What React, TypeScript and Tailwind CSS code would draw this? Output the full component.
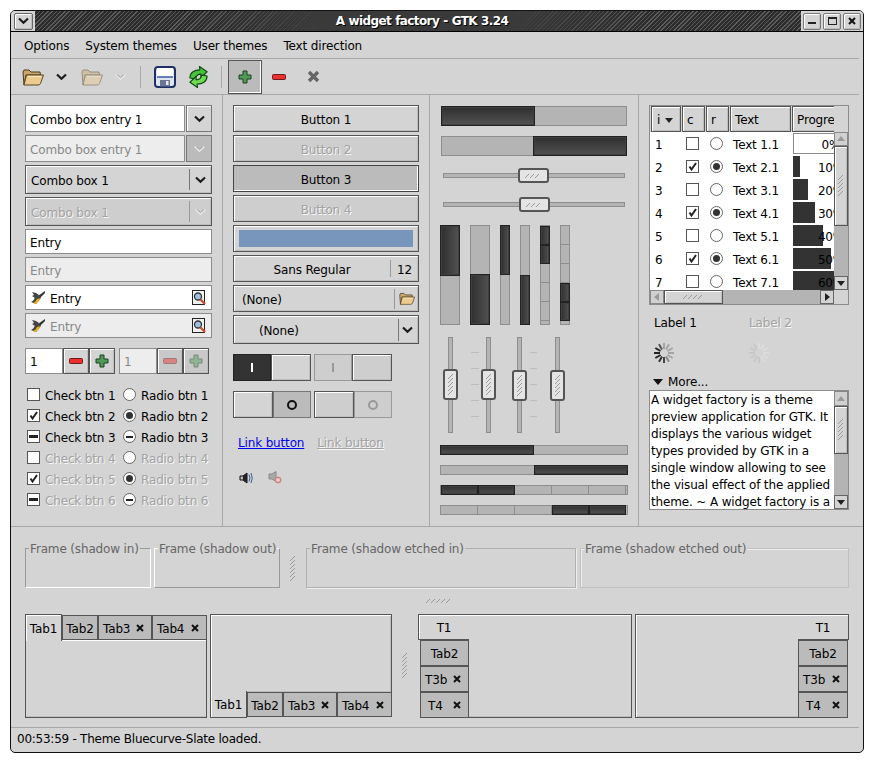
import type { ReactNode } from "react";

const raised = "border border-[#555] shadow-[inset_1px_1px_0_#fff,inset_-1px_-1px_0_#bdbdbd]";
const dimText = "text-[#a2a2a2] [text-shadow:1px_1px_0_#f8f8f8]";
const trough = "bg-[#b4b4b4] border border-[#8e8e8e]";
const fill = "bg-linear-to-b from-[#2f2f2f] to-[#525252] border border-[#222] shadow-[inset_0_0_0_1px_#3f3f3f]";
const fillV = "bg-linear-to-r from-[#2f2f2f] to-[#525252] border border-[#222] shadow-[inset_0_0_0_1px_#3f3f3f]";

// text sits a pixel under the optical centre in this theme
function T({ className = "", children }: { className?: string; children: ReactNode }) {
  return <span className={`pt-[2px] ${className}`}>{children}</span>;
}

function Chevron({ dim = false }: { dim?: boolean }) {
  return (
    <svg width="11" height="8" viewBox="0 0 11 8">
      <path d="M1 1.5 L5.5 5.8 L10 1.5" fill="none" stroke={dim ? "#e8e8e8" : "#1c1c1c"} strokeWidth="2.2" />
      {dim && <path d="M2 1.5 L5.5 4.6 L9 1.5" fill="none" stroke="#9a9a9a" strokeWidth="1" />}
    </svg>
  );
}

function Folder({ dim = false, size = 22 }: { dim?: boolean; size?: number }) {
  return (
    <svg width={size} height={(size * 18) / 22} viewBox="0 0 22 18" opacity={dim ? 0.45 : 1}>
      <path d="M1 4 L2 2 H7 L9 4 H18 L18.5 7 H4 L2 17 Z" fill="#c9a76a" stroke="#4a3a20" strokeWidth="1" />
      <path d="M4.5 7 H21.5 L18.5 15.5 Q18 17 16 17 H2 Z" fill="#eccb8f" stroke="#5a4526" strokeWidth="1" />
      <path d="M6 8.5 H19" stroke="#f9e8c4" strokeWidth="1" />
    </svg>
  );
}

function Save() {
  return (
    <svg width="22" height="22" viewBox="0 0 22 22">
      <rect x="1" y="1" width="20" height="20" rx="3" fill="#dfe5f0" stroke="#1e2f66" strokeWidth="2" />
      <rect x="3" y="2" width="16" height="9" fill="#fff" />
      <path d="M3 11 H19" stroke="#3a58a0" strokeWidth="1.5" />
      <rect x="6" y="14" width="10" height="6.5" fill="#6a7692" />
      <rect x="12" y="15" width="2.5" height="4" fill="#e8eaf0" />
    </svg>
  );
}

function Refresh() {
  const arrow = "M2 13 C2 7 7 4.5 12.5 4.5 L12 1 L20 6.5 L13.5 12.5 L13.5 9 C10 9 8.5 10.5 7.5 14 Z";
  return (
    <svg width="21" height="24" viewBox="0 0 22 24">
      <path d={arrow} fill="#47c23a" stroke="#0d4a12" strokeWidth="1.2" strokeLinejoin="round" />
      <path d={arrow} fill="#6fdc4f" stroke="#0d4a12" strokeWidth="1.2" strokeLinejoin="round" transform="rotate(180 11 12)" />
    </svg>
  );
}

function PlusIcon({ size = 14, dim = false }: { size?: number; dim?: boolean }) {
  return (
    <svg width={size} height={size} viewBox="0 0 14 14" opacity={dim ? 0.45 : 1}>
      <path d="M5 1 H9 V5 H13 V9 H9 V13 H5 V9 H1 V5 H5 Z" fill="#4e9a56" stroke="#1f3f22" strokeWidth="1" />
    </svg>
  );
}

function MinusIcon({ w = 14, h = 6, dim = false }: { w?: number; h?: number; dim?: boolean }) {
  return (
    <svg width={w} height={h} viewBox="0 0 14 6" preserveAspectRatio="none" opacity={dim ? 0.45 : 1}>
      <rect x="0.5" y="0.5" width="13" height="5" rx="1" fill="#ec2f2f" stroke="#6d1c1c" strokeWidth="1" />
    </svg>
  );
}

function CloseGray() {
  return (
    <svg width="13" height="13" viewBox="0 0 13 13">
      <path d="M2 2 L11 11 M11 2 L2 11" stroke="#666" strokeWidth="3.4" />
    </svg>
  );
}

function TabX() {
  return (
    <svg width="8" height="8" viewBox="0 0 8 8">
      <path d="M1 1 L7 7 M7 1 L1 7" stroke="#111" strokeWidth="2" />
    </svg>
  );
}

function Brush() {
  return (
    <svg width="16" height="15" viewBox="0 0 16 15">
      <path d="M15 1 L8 6 L10 8 L15 3 Z" fill="#333" />
      <path d="M2 2 L4 5 L2 6 L5 8 L9 5 L6 3 Z" fill="#444" />
      <path d="M5 7 L9 5 L11 8 L6 14 L1 12 C3 11 4 10 5 7 Z" fill="#444" />
      <path d="M7 9 L11 8 L6 14 L3 13 C5 12 6 11 7 9 Z" fill="#e9b21a" />
    </svg>
  );
}

function FindIcon() {
  return (
    <svg width="15" height="16" viewBox="0 0 15 16">
      <rect x="0.5" y="0.5" width="12" height="14" fill="#f2f2f2" stroke="#222" strokeWidth="1" />
      <circle cx="6" cy="6.5" r="3.5" fill="#9fc0dc" stroke="#333" strokeWidth="1.3" />
      <path d="M8.5 9.5 L13 14" stroke="#d2512d" strokeWidth="2.4" />
    </svg>
  );
}

function SpeakerOn() {
  return (
    <svg width="14" height="12" viewBox="0 0 14 12">
      <path d="M1 4 H4 L8 1 V11 L4 8 H1 Z" fill="#bdbdbd" stroke="#111" strokeWidth="1" />
      <path d="M4 4 L8 1 V11 L4 8 Z" fill="#222" />
      <path d="M10 2.5 Q12 6 10 9.5" fill="none" stroke="#3a5c93" strokeWidth="1" />
      <path d="M12 1 Q14.5 6 12 11" fill="none" stroke="#3a5c93" strokeWidth="1" />
    </svg>
  );
}

function SpeakerOff() {
  return (
    <svg width="14" height="13" viewBox="0 0 14 13">
      <path d="M1 3 H4 L8 0.5 V10.5 L4 8 H1 Z" fill="#a8a8a8" stroke="#8a8a8a" strokeWidth="1" />
      <circle cx="10" cy="9" r="3" fill="#e9a5a5" stroke="#c08080" strokeWidth="1" />
      <path d="M8.5 9 H11.5" stroke="#fff" strokeWidth="1" />
    </svg>
  );
}

function Grip({ vertical = false, count = 6 }: { vertical?: boolean; count?: number }) {
  const w = vertical ? 6 : count * 5 + 2;
  const h = vertical ? count * 4 + 2 : 6;
  const lines = Array.from({ length: count }, (_, i) => i);
  return (
    <svg width={w} height={h} viewBox={`0 0 ${w} ${h}`}>
      {lines.map((i) =>
        vertical ? (
          <path key={i} d={`M0 ${i * 4 + 5} L5 ${i * 4}`} stroke="#9a9a9a" strokeWidth="1" />
        ) : (
          <path key={i} d={`M${i * 5} 5 L${i * 5 + 4} 1`} stroke="#9a9a9a" strokeWidth="1" />
        )
      )}
    </svg>
  );
}

function Spinner({ dim = false }: { dim?: boolean }) {
  const rays = Array.from({ length: 12 }, (_, i) => i);
  const dark = ["#a4a4a4", "#a4a4a4", "#a4a4a4", "#a4a4a4", "#a4a4a4", "#8a8a8a", "#444", "#333", "#222", "#222", "#222", "#555"];
  return (
    <svg width="20" height="20" viewBox="-10 -10 20 20">
      {rays.map((i) => (
        <path key={i} d="M0 -10 V-4" stroke={dim ? (i >= 6 ? "#c8c8c8" : "#dcdcdc") : dark[i]} strokeWidth="2" transform={`rotate(${i * 30})`} />
      ))}
    </svg>
  );
}

function Check({ state }: { state: "off" | "on" | "mixed" }) {
  return (
    <span className="flex h-[13px] w-[13px] shrink-0 items-center justify-center border border-[#555] bg-white">
      {state === "on" && (
        <svg width="9" height="9" viewBox="0 0 9 9">
          <path d="M1.5 4.5 L3.5 7.5 L8 1" fill="none" stroke="#222" strokeWidth="2" />
        </svg>
      )}
      {state === "mixed" && <span className="h-[3px] w-[9px] bg-[#222]" />}
    </span>
  );
}

function Radio({ state }: { state: "off" | "on" | "mixed" }) {
  return (
    <span className="flex h-[13px] w-[13px] shrink-0 items-center justify-center rounded-full border border-[#666] bg-white">
      {state === "on" && <span className="h-[7px] w-[7px] rounded-full bg-[#333]" />}
      {state === "mixed" && <span className="h-[2px] w-[7px] bg-[#222]" />}
    </span>
  );
}

function Btn({ dim = false, pressed = false, className = "", children }: { dim?: boolean; pressed?: boolean; className?: string; children?: ReactNode }) {
  const look = pressed
    ? "border border-[#444] bg-[#bbbbbb] shadow-[inset_-1px_-1px_0_#fff]"
    : dim
      ? `${raised} bg-[#cecece] ${dimText}`
      : `${raised} bg-[#d4d4d4]`;
  return <div className={`flex items-center ${look} ${className}`}>{children}</div>;
}

function SmallBtn({ dim = false, children }: { dim?: boolean; children: ReactNode }) {
  return <div className={`flex h-full w-[26px] items-center justify-center ${raised} ${dim ? "bg-[#c8c8c8]" : "bg-[#d4d4d4]"}`}>{children}</div>;
}

function Entry({ dim = false, icons = false, className = "h-[25px]" }: { dim?: boolean; icons?: boolean; className?: string }) {
  return (
    <div className={`flex items-center gap-[4px] border border-[#8c8c8c] px-[4px] ${dim ? "bg-[#ededed] text-[#888]" : "bg-white text-black"} ${className}`}>
      {icons && <Brush />}
      <T className="flex-1">Entry</T>
      {icons && <FindIcon />}
    </div>
  );
}

function ComboEntry({ dim = false }: { dim?: boolean }) {
  return (
    <div className="flex h-[27px]">
      <div className={`flex w-[160px] items-center border border-[#8c8c8c] pl-[4px] ${dim ? "bg-[#ededed] text-[#888]" : "bg-white"}`}><T>Combo box entry 1</T></div>
      <div className={`ml-px flex w-[26px] items-center justify-center border border-[#777] ${dim ? "bg-[#bbb]" : "bg-[#d4d4d4] shadow-[inset_1px_1px_0_#fff]"}`}>
        <Chevron dim={dim} />
      </div>
    </div>
  );
}

function ComboBox({ dim = false }: { dim?: boolean }) {
  return (
    <Btn dim={dim} className="h-[29px]">
      <T className="flex-1 pl-[5px]">Combo box 1</T>
      <span className={`h-[21px] w-px ${dim ? "bg-[#999]" : "bg-[#777]"}`} />
      <span className="flex w-[21px] justify-center">
        <Chevron dim={dim} />
      </span>
    </Btn>
  );
}

function Spin({ dim = false }: { dim?: boolean }) {
  return (
    <div className="flex h-[26px] w-[90px]">
      <div className={`flex w-[38px] items-center border border-[#8c8c8c] pl-[4px] ${dim ? "bg-[#ededed] text-[#888]" : "bg-white"}`}><T>1</T></div>
      <SmallBtn dim={dim}><MinusIcon dim={dim} /></SmallBtn>
      <SmallBtn dim={dim}><PlusIcon dim={dim} /></SmallBtn>
    </div>
  );
}

function ToggleLight({ w, dim = false }: { w: string; dim?: boolean }) {
  return <div className={`${w} ${raised} ${dim ? "bg-[#cecece]" : "bg-[#d4d4d4]"}`} />;
}

function Thumb({ className = "", vertical = false }: { className?: string; vertical?: boolean }) {
  return (
    <div className={`absolute flex items-center justify-center rounded-[3px] border-2 border-[#555] bg-[#e4e4e4] ${className}`}>
      {vertical ? <Grip vertical count={5} /> : <Grip count={3} />}
    </div>
  );
}

function HSlider({ className, thumb }: { className: string; thumb: string }) {
  return (
    <div className={`relative ml-[2px] flex h-[15px] w-[182px] items-center ${className}`}>
      <div className={`h-[5px] w-full ${trough}`} />
      <Thumb className={`top-0 h-[15px] w-[31px] ${thumb}`} />
    </div>
  );
}

function VSlider({ top }: { top: string }) {
  return (
    <div className="relative flex h-[96px] w-[15px] justify-center">
      <div className={`h-full w-[5px] ${trough}`} />
      <Thumb vertical className={`left-0 h-[31px] w-[15px] ${top}`} />
    </div>
  );
}

function Ticks({ w }: { w: string }) {
  return (
    <div className={`flex flex-col gap-[15px] pt-[15px] ${w}`}>
      <div className="h-px bg-[#bdbdbd]" />
      <div className="h-px bg-[#bdbdbd]" />
      <div className="h-px bg-[#bdbdbd]" />
      <div className="h-px bg-[#bdbdbd]" />
      <div className="h-px bg-[#bdbdbd]" />
    </div>
  );
}

function VProgress({ w, h, bottom = false }: { w: string; h: string; bottom?: boolean }) {
  return (
    <div className={`flex h-[100px] flex-col ${w} ${trough} ${bottom ? "justify-end" : ""}`}>
      <div className={`${h} ${fillV} -m-px`} />
    </div>
  );
}

function VSegments({ from, to }: { from: number; to: number }) {
  const cells = [0, 1, 2, 3, 4];
  return (
    <div className={`flex h-[100px] w-[10px] flex-col ${trough}`}>
      {cells.map((i) => (
        <div key={i} className={`h-[19px] ${i >= from && i < to ? `${fillV} -mx-px` : "border-b border-[#8e8e8e]"}`} />
      ))}
    </div>
  );
}

function HSegments({ from, to }: { from: number; to: number }) {
  const cells = [0, 1, 2, 3, 4];
  return (
    <div className={`flex h-[10px] w-[188px] ${trough}`}>
      {cells.map((i) => (
        <div key={i} className={`w-[37px] ${i >= from && i < to ? `${fill} -my-px` : "border-r border-[#8e8e8e]"}`} />
      ))}
    </div>
  );
}

function Arrow({ dir, dim = false }: { dir: "up" | "down" | "left" | "right"; dim?: boolean }) {
  const d = { up: "M0 6 L4 1 L8 6 Z", down: "M0 2 L8 2 L4 7 Z", left: "M6 0 L6 8 L1 4 Z", right: "M2 0 L2 8 L7 4 Z" }[dir];
  return (
    <svg width="8" height="8" viewBox="0 0 8 8">
      <path d={d} fill={dim ? "#999" : "#222"} />
    </svg>
  );
}

const rows = [
  { i: 1, on: false, pct: 0, bar: "w-0" },
  { i: 2, on: true, pct: 10, bar: "w-[7px]" },
  { i: 3, on: false, pct: 20, bar: "w-[15px]" },
  { i: 4, on: true, pct: 30, bar: "w-[22px]" },
  { i: 5, on: false, pct: 40, bar: "w-[30px]" },
  { i: 6, on: true, pct: 50, bar: "w-[38px]" },
  { i: 7, on: false, pct: 60, bar: "w-[46px]" },
];

const textLines = [
  "A widget factory is a theme",
  "preview application for GTK. It",
  "displays the various widget",
  "types provided by GTK in a",
  "single window allowing to see",
  "the visual effect of the applied",
  "theme. ~ A widget factory is a",
];

function HeaderCell({ w, children }: { w: string; children: ReactNode }) {
  return <div className={`flex h-[26px] shrink-0 items-center overflow-hidden pl-[4px] pt-[2px] ${w} ${raised}`}>{children}</div>;
}

function TreeView() {
  return (
    <div className="flex h-[200px] w-[200px] flex-col border border-[#8c8c8c] bg-[#d4d4d4]">
      <div className="flex h-[184px]">
        <div className="flex w-[184px] flex-col overflow-hidden">
          <div className="flex gap-[1px] bg-[#d4d4d4] pl-px">
            <HeaderCell w="w-[30px]">
              <span className="pl-px">i</span>
              <span className="ml-[5px]"><Arrow dir="down" /></span>
            </HeaderCell>
            <HeaderCell w="w-[23px]">c</HeaderCell>
            <HeaderCell w="w-[23px]">r</HeaderCell>
            <HeaderCell w="w-[61px]">Text</HeaderCell>
            <HeaderCell w="w-[60px]">Progress</HeaderCell>
          </div>
          <div className="h-[158px] overflow-hidden bg-white">
            {rows.map((r) => (
              <div key={r.i} className="flex h-[23px] items-center">
                <span className="w-[31px] shrink-0 pl-[5px] pt-[3px]">{r.i}</span>
                <span className="flex w-[23px] shrink-0 justify-center"><Check state={r.on ? "on" : "off"} /></span>
                <span className="flex w-[25px] shrink-0 justify-center"><Radio state={r.on ? "on" : "off"} /></span>
                <span className="w-[64px] shrink-0 whitespace-nowrap pl-[4px] pt-[3px]">{`Text ${r.i}.1`}</span>
                <span className={`relative flex h-[21px] w-[76px] shrink-0 items-center justify-center pt-[2px] ${r.pct === 0 ? "border border-[#8c8c8c]" : ""}`}>
                  <span className={`absolute left-0 top-0 h-full bg-[#333] ${r.bar}`} />
                  <span className="relative">{r.pct}%</span>
                </span>
              </div>
            ))}
          </div>
        </div>
        <div className="flex w-[14px] flex-col pt-[26px]">
          <div className="flex h-[14px] items-center justify-center border border-[#888] bg-[#d0d0d0]"><Arrow dir="up" dim /></div>
          <div className={`flex h-[80px] items-center justify-center bg-[#d4d4d4] ${raised}`}><Grip vertical count={5} /></div>
          <div className="flex-1 bg-[#b4b4b4]" />
          <div className="flex h-[14px] items-center justify-center border border-[#666] bg-[#d4d4d4]"><Arrow dir="down" /></div>
        </div>
      </div>
      <div className="flex h-[14px]">
        <div className="flex w-[14px] items-center justify-center border border-[#888] bg-[#d0d0d0]"><Arrow dir="left" dim /></div>
        <div className={`flex w-[59px] items-center justify-center bg-[#d4d4d4] ${raised}`}><Grip count={4} /></div>
        <div className="w-[97px] bg-[#b4b4b4]" />
        <div className="flex w-[14px] items-center justify-center border border-[#666] bg-[#d4d4d4]"><Arrow dir="right" /></div>
      </div>
    </div>
  );
}

function TextView() {
  return (
    <div className="flex h-[120px] w-[200px] border border-[#8c8c8c] bg-white">
      <div className="h-full w-[184px] overflow-hidden pt-px pl-px leading-[17px] whitespace-pre">
        {textLines.map((line) => (
          <div key={line}>{line}</div>
        ))}
      </div>
      <div className="flex w-[14px] flex-col">
        <div className="flex h-[15px] items-center justify-center border border-[#888] bg-[#d0d0d0]"><Arrow dir="up" dim /></div>
        <div className={`flex h-[48px] items-center justify-center bg-[#d4d4d4] ${raised}`}><Grip vertical count={5} /></div>
        <div className="flex-1 bg-[#b4b4b4]" />
        <div className="flex h-[14px] items-center justify-center border border-[#666] bg-[#d4d4d4]"><Arrow dir="down" /></div>
      </div>
    </div>
  );
}

function Frame({ label, w, kind }: { label: string; w: string; kind: string }) {
  return (
    <div className={`relative h-[40px] ${w} ${kind}`}>
      <span className="absolute -top-[8px] left-[3px] whitespace-nowrap bg-[#d4d4d4] px-[1px] leading-[16px] text-[#666]">{label}</span>
    </div>
  );
}

function HTab({ w, active = false, bottom = false, label, x = false }: { w: string; active?: boolean; bottom?: boolean; label: string; x?: boolean }) {
  if (active) {
    return (
      <div className={`relative z-10 flex h-[27px] shrink-0 items-center justify-center bg-[#d4d4d4] ${w} ${bottom ? "-mt-px border-r border-b border-l border-[#555] shadow-[inset_1px_0_0_#fff]" : "-mb-px border-t border-r border-l border-[#555] shadow-[inset_1px_1px_0_#fff]"}`}>
        <T>{label}</T>
      </div>
    );
  }
  return (
    <div className={`flex h-[25px] shrink-0 items-center border border-[#555] bg-[#bbbbbb] ${x ? "justify-between pr-[7px] pl-[4px]" : "justify-center"} ${w}`}>
      <T>{label}</T>
      {x && <TabX />}
    </div>
  );
}

function TopNotebook() {
  return (
    <div className="flex h-[104px] w-[182px] flex-col">
      <div className="flex items-end">
        <HTab w="w-[37px]" active label="Tab1" />
        <HTab w="w-[36px]" label="Tab2" />
        <HTab w="w-[54px]" label="Tab3" x />
        <HTab w="w-[55px]" label="Tab4" x />
      </div>
      <div className="flex-1 border-r border-b border-l border-[#555] shadow-[inset_0_1px_0_#fff,inset_0_-1px_0_#bdbdbd]" />
    </div>
  );
}

function BottomNotebook() {
  return (
    <div className="flex h-[104px] w-[182px] flex-col">
      <div className={`flex-1 ${raised} border-b-0`} />
      <div className="flex items-start">
        <HTab w="w-[37px]" active bottom label="Tab1" />
        <HTab w="w-[36px]" label="Tab2" />
        <HTab w="w-[54px]" label="Tab3" x />
        <HTab w="w-[55px]" label="Tab4" x />
      </div>
    </div>
  );
}

function SideTab({ label, x = false }: { label: string; x?: boolean }) {
  return (
    <div className={`flex h-[26px] items-center border border-[#555] bg-[#bbbbbb] ${x ? "justify-between pr-[7px] pl-[4px]" : "justify-center"}`}>
      <T className={label === "T4" ? "pl-[3px]" : ""}>{label}</T>
      {x && <TabX />}
    </div>
  );
}

function SideNotebook({ right = false }: { right?: boolean }) {
  const t1 = right
    ? "border-t border-r border-b shadow-[inset_0_1px_0_#fff]"
    : "border-t border-b border-l shadow-[inset_1px_1px_0_#fff]";
  const pane = right
    ? "border-t border-b border-l shadow-[inset_1px_1px_0_#fff,inset_0_-1px_0_#bdbdbd]"
    : "border-t border-r border-b shadow-[inset_0_1px_0_#fff,inset_0_-1px_0_#bdbdbd]";
  return (
    <div className={`flex h-[104px] w-[214px] ${right ? "flex-row-reverse" : ""}`}>
      <div className="flex w-[51px] flex-col">
        <div className={`flex h-[26px] items-center justify-center border-[#555] ${t1}`}><T>T1</T></div>
        <div className={`flex flex-col ${right ? "mr-px" : "ml-[2px]"}`}>
          <SideTab label="Tab2" />
          <SideTab label="T3b" x />
          <SideTab label="T4" x />
        </div>
      </div>
      <div className={`flex-1 border-[#555] ${pane}`} />
    </div>
  );
}

export default function App() {
  return (
    <div className="h-[763px] w-[874px] bg-white p-[10px] [font-family:'DejaVu_Sans',sans-serif] text-[12px] leading-[16px] tracking-[-0.15px] text-black">
      <div className="flex h-[743px] w-[854px] flex-col overflow-hidden rounded-t-[5px] rounded-b-[5px] border border-[#111] bg-[#d4d4d4]">
        {/* Title bar */}
        <div className="flex h-[21px] shrink-0 items-center border-b border-black">
          <div className="flex h-full w-[24px] items-center justify-center bg-[#d4d4d4]">
            <div className={`flex h-[17px] w-[19px] items-center justify-center rounded-[2px] ${raised} border-[#666]`}><Chevron /></div>
          </div>
          <div className="relative flex h-full flex-1 items-center justify-center overflow-hidden bg-[repeating-linear-gradient(135deg,#5c5c5c_0px,#5c5c5c_1px,#2c2c2c_1px,#2c2c2c_3px)] pl-[8px]">
            <div className="absolute inset-0 bg-[linear-gradient(90deg,transparent_20%,#3a3a3a_38%,#3a3a3a_62%,transparent_80%)]" />
            <span className="relative font-bold tracking-[-0.6px] text-white [text-shadow:1px_1px_0_#000] [word-spacing:0.5px]">A widget factory - GTK 3.24</span>
          </div>
          <div className="flex h-full w-[62px] items-center justify-center gap-[2px] bg-[#d4d4d4]">
            <div className={`flex h-[17px] w-[18px] items-center justify-center rounded-[2px] ${raised} border-[#777]`}><span className="mt-[4px] h-[2px] w-[8px] bg-[#222]" /></div>
            <div className={`flex h-[17px] w-[18px] items-center justify-center rounded-[2px] ${raised} border-[#777]`}><span className="h-[8px] w-[9px] border border-t-2 border-[#222]" /></div>
            <div className={`flex h-[17px] w-[18px] items-center justify-center rounded-[2px] ${raised} border-[#777]`}><TabX /></div>
          </div>
        </div>

        {/* Menu bar */}
        <div className="flex h-[26px] shrink-0 items-center gap-[16px] pt-[2px] pl-[13px]">
          <span>Options</span>
          <span>System themes</span>
          <span>User themes</span>
          <span>Text direction</span>
        </div>
        <div className="mr-[4px] h-px shrink-0 bg-[#a8a8a8]" />

        {/* Toolbar */}
        <div className="flex h-[35px] shrink-0 items-center pl-[11px]">
          <Folder />
          <span className="ml-[12px]"><Chevron /></span>
          <span className="ml-[14px]"><Folder dim /></span>
          <span className="ml-[12px]"><Chevron dim /></span>
          <span className="ml-[14px] h-[22px] w-px bg-[#a8a8a8]" />
          <span className="ml-[13px]"><Save /></span>
          <span className="ml-[12px]"><Refresh /></span>
          <span className="ml-[12px] h-[22px] w-px bg-[#a8a8a8]" />
          <span className="ml-[6px] flex h-[34px] w-[34px] items-center justify-center border border-[#555] bg-[#bbbbbb] shadow-[inset_-1px_-1px_0_#fff]"><PlusIcon /></span>
          <span className="ml-[10px]"><MinusIcon /></span>
          <span className="ml-[21px]"><CloseGray /></span>
        </div>
        <div className="mr-[4px] h-px shrink-0 bg-[#a8a8a8]" />

        {/* Main columns */}
        <div className="flex h-[431px] shrink-0">
          <div className="flex w-[212px] shrink-0 flex-col border-r border-[#a8a8a8] pt-[10px] pl-[14px]">
            <div className="flex w-[187px] flex-col gap-[3px]">
              <ComboEntry />
              <ComboEntry dim />
              <ComboBox />
              <ComboBox dim />
              <Entry />
              <Entry dim />
              <Entry icons />
              <Entry dim icons />
            </div>
            <div className="mt-[10px] flex gap-[4px]">
              <Spin />
              <Spin dim />
            </div>
            <div className="mt-[10px] ml-[2px] grid w-[190px] grid-cols-[96px_94px] auto-rows-[21px] items-center">
              {(["off", "on", "mixed", "off", "on", "mixed"] as const).map((s, i) => (
                <div key={i} className={`contents ${i > 2 ? dimText : ""}`}>
                  <span className="flex items-center gap-[5px] whitespace-nowrap"><Check state={s} /><T>{`Check btn ${i + 1}`}</T></span>
                  <span className="flex items-center gap-[5px] whitespace-nowrap"><Radio state={s} /><T>{`Radio btn ${i + 1}`}</T></span>
                </div>
              ))}
            </div>
          </div>

          <div className="flex w-[207px] shrink-0 flex-col border-r border-[#a8a8a8] pt-[10px] pl-[10px]">
            <div className="flex w-[186px] flex-col gap-[3px]">
              <Btn className="h-[27px] justify-center"><T>Button 1</T></Btn>
              <Btn dim className="h-[27px] justify-center"><T>Button 2</T></Btn>
              <Btn pressed className="h-[27px] justify-center"><T>Button 3</T></Btn>
              <Btn dim className="h-[27px] justify-center"><T>Button 4</T></Btn>
              <Btn className="h-[27px] px-[5px]"><span className="h-[17px] w-full bg-[#7896bb]" /></Btn>
              <Btn className="h-[27px]">
                <T className="w-[156px] text-center">Sans Regular</T>
                <span className="h-[17px] w-px bg-[#999]" />
                <T className="pl-[6px]">12</T>
              </Btn>
              <Btn className="h-[27px]">
                <T className="w-[160px] pl-[8px]">(None)</T>
                <span className="h-[20px] w-px bg-[#999]" />
                <span className="pl-[4px]"><Folder size={16} /></span>
              </Btn>
              <Btn className="h-[29px]">
                <T className="w-[164px] pl-[25px]">(None)</T>
                <span className="h-[22px] w-px bg-[#777]" />
                <span className="pl-[3px]"><Chevron /></span>
              </Btn>
            </div>
            <div className="mt-[10px] flex h-[27px]">
              <div className="flex w-[38px] items-center justify-center border border-[#222] bg-[#333]"><span className="h-[9px] w-[2px] bg-white" /></div>
              <ToggleLight w="w-[40px]" />
              <div className="ml-[3px] flex w-[38px] items-center justify-center border border-[#999] bg-[#cecece]"><span className="h-[9px] w-[2px] bg-[#999]" /></div>
              <ToggleLight w="w-[40px]" dim />
            </div>
            <div className="mt-[10px] flex h-[27px]">
              <ToggleLight w="w-[40px]" />
              <div className="flex w-[38px] items-center justify-center border border-[#777] bg-[#bbbbbb]"><span className="h-[10px] w-[10px] rounded-full border-2 border-[#111]" /></div>
              <div className="ml-[3px] flex"><ToggleLight w="w-[40px]" dim /></div>
              <div className="flex w-[38px] items-center justify-center border border-[#999] bg-[#cecece]"><span className="h-[10px] w-[10px] rounded-full border-2 border-[#999]" /></div>
            </div>
            <div className="mt-[17px] flex gap-[13px] pl-[5px]">
              <span className="text-[#0000ee] underline">Link button</span>
              <span className={`underline ${dimText}`}>Link button</span>
            </div>
            <div className="mt-[20px] flex items-center gap-[15px] pl-[6px]">
              <SpeakerOn />
              <SpeakerOff />
            </div>
          </div>

          <div className="flex w-[209px] shrink-0 flex-col border-r border-[#a8a8a8] pt-[11px] pl-[10px]">
            <div className={`ml-[1px] flex h-[20px] w-[186px] ${trough}`}><div className={`-m-px w-[94px] ${fill}`} /></div>
            <div className={`mt-[10px] ml-[1px] flex h-[20px] w-[186px] justify-end ${trough}`}><div className={`-m-px w-[94px] ${fill}`} /></div>
            <HSlider className="mt-[12px] ml-[3px]" thumb="left-[75px]" />
            <HSlider className="mt-[14px] ml-[3px]" thumb="left-[76px]" />
            <div className="mt-[13px] flex gap-[10px]">
              <VProgress w="w-[20px]" h="h-[51px]" />
              <VProgress w="w-[20px]" h="h-[51px]" bottom />
              <VProgress w="w-[10px]" h="h-[50px]" />
              <VProgress w="w-[10px]" h="h-[50px]" bottom />
              <VSegments from={0} to={2} />
              <VSegments from={3} to={5} />
            </div>
            <div className="mt-[12px] flex pl-[3px]">
              <VSlider top="top-[32px]" />
              <div className="w-[13px]" />
              <Ticks w="w-[8px]" />
              <div className="w-[2px]" />
              <VSlider top="top-[32px]" />
              <div className="w-[16px]" />
              <VSlider top="top-[33px]" />
              <div className="w-[3px]" />
              <Ticks w="w-[7px]" />
              <div className="w-[13px]" />
              <VSlider top="top-[33px]" />
            </div>
            <div className={`mt-[12px] flex h-[10px] w-[188px] ${trough}`}><div className={`-my-px -ml-px w-[94px] ${fill}`} /></div>
            <div className={`mt-[10px] flex h-[10px] w-[188px] justify-end ${trough}`}><div className={`-my-px -mr-px w-[94px] ${fill}`} /></div>
            <div className="mt-[10px]"><HSegments from={0} to={2} /></div>
            <div className="mt-[10px]"><HSegments from={3} to={5} /></div>
          </div>

          <div className="flex w-[224px] shrink-0 flex-col pt-[10px] pl-[10px]">
            <TreeView />
            <div className="mt-[9px] flex h-[16px] items-center pl-[5px]">
              <T className="w-[95px]">Label 1</T>
              <T className={dimText}>Label 2</T>
            </div>
            <div className="mt-[13px] flex h-[20px] pl-[5px]">
              <span className="w-[95px]"><Spinner /></span>
              <Spinner dim />
            </div>
            <div className="mt-[10px] flex h-[17px] items-center gap-[5px] pl-[4px]">
              <svg width="10" height="6" viewBox="0 0 10 6"><path d="M0 0 H10 L5 6 Z" fill="#111" /></svg>
              <span>More...</span>
            </div>
            <TextView />
          </div>
        </div>
        <div className="h-px shrink-0 bg-[#a8a8a8]" />

        {/* Frames */}
        <div className="flex items-center pt-[21px] pl-[14px]">
          <Frame label="Frame (shadow in)" w="w-[126px]" kind="border-t border-l border-t-[#999] border-l-[#999] border-r border-b border-r-white border-b-white" />
          <div className="w-[3px]" />
          <Frame label="Frame (shadow out)" w="w-[126px]" kind="border-t border-l border-t-white border-l-white border-r border-b border-r-[#999] border-b-[#999]" />
          <div className="flex h-[40px] w-[26px] justify-center pt-[8px]"><Grip vertical /></div>
          <Frame label="Frame (shadow etched in)" w="w-[270px]" kind="border border-[#b0b0b0] shadow-[1px_1px_0_#eee]" />
          <div className="w-[4px]" />
          <Frame label="Frame (shadow etched out)" w="w-[269px]" kind="border border-[#c0c0c0] shadow-[inset_1px_1px_0_#eee]" />
        </div>
        <div className="mt-[10px] flex h-[6px] justify-center pl-[5px]"><Grip count={5} /></div>

        {/* Notebooks */}
        <div className="mt-[10px] flex pl-[14px]">
          <TopNotebook />
          <div className="w-[3px]" />
          <BottomNotebook />
          <div className="flex w-[26px] items-center justify-center"><Grip vertical /></div>
          <SideNotebook />
          <div className="w-[3px]" />
          <SideNotebook right />
        </div>
        <div className="mt-[9px] mr-[4px] h-px shrink-0 bg-[#a8a8a8]" />

        {/* Status bar */}
        <div className="flex flex-1 items-center pb-[2px] pl-[6px] tracking-[-0.25px]">00:53:59 - Theme Bluecurve-Slate loaded.</div>
      </div>
    </div>
  );
}
